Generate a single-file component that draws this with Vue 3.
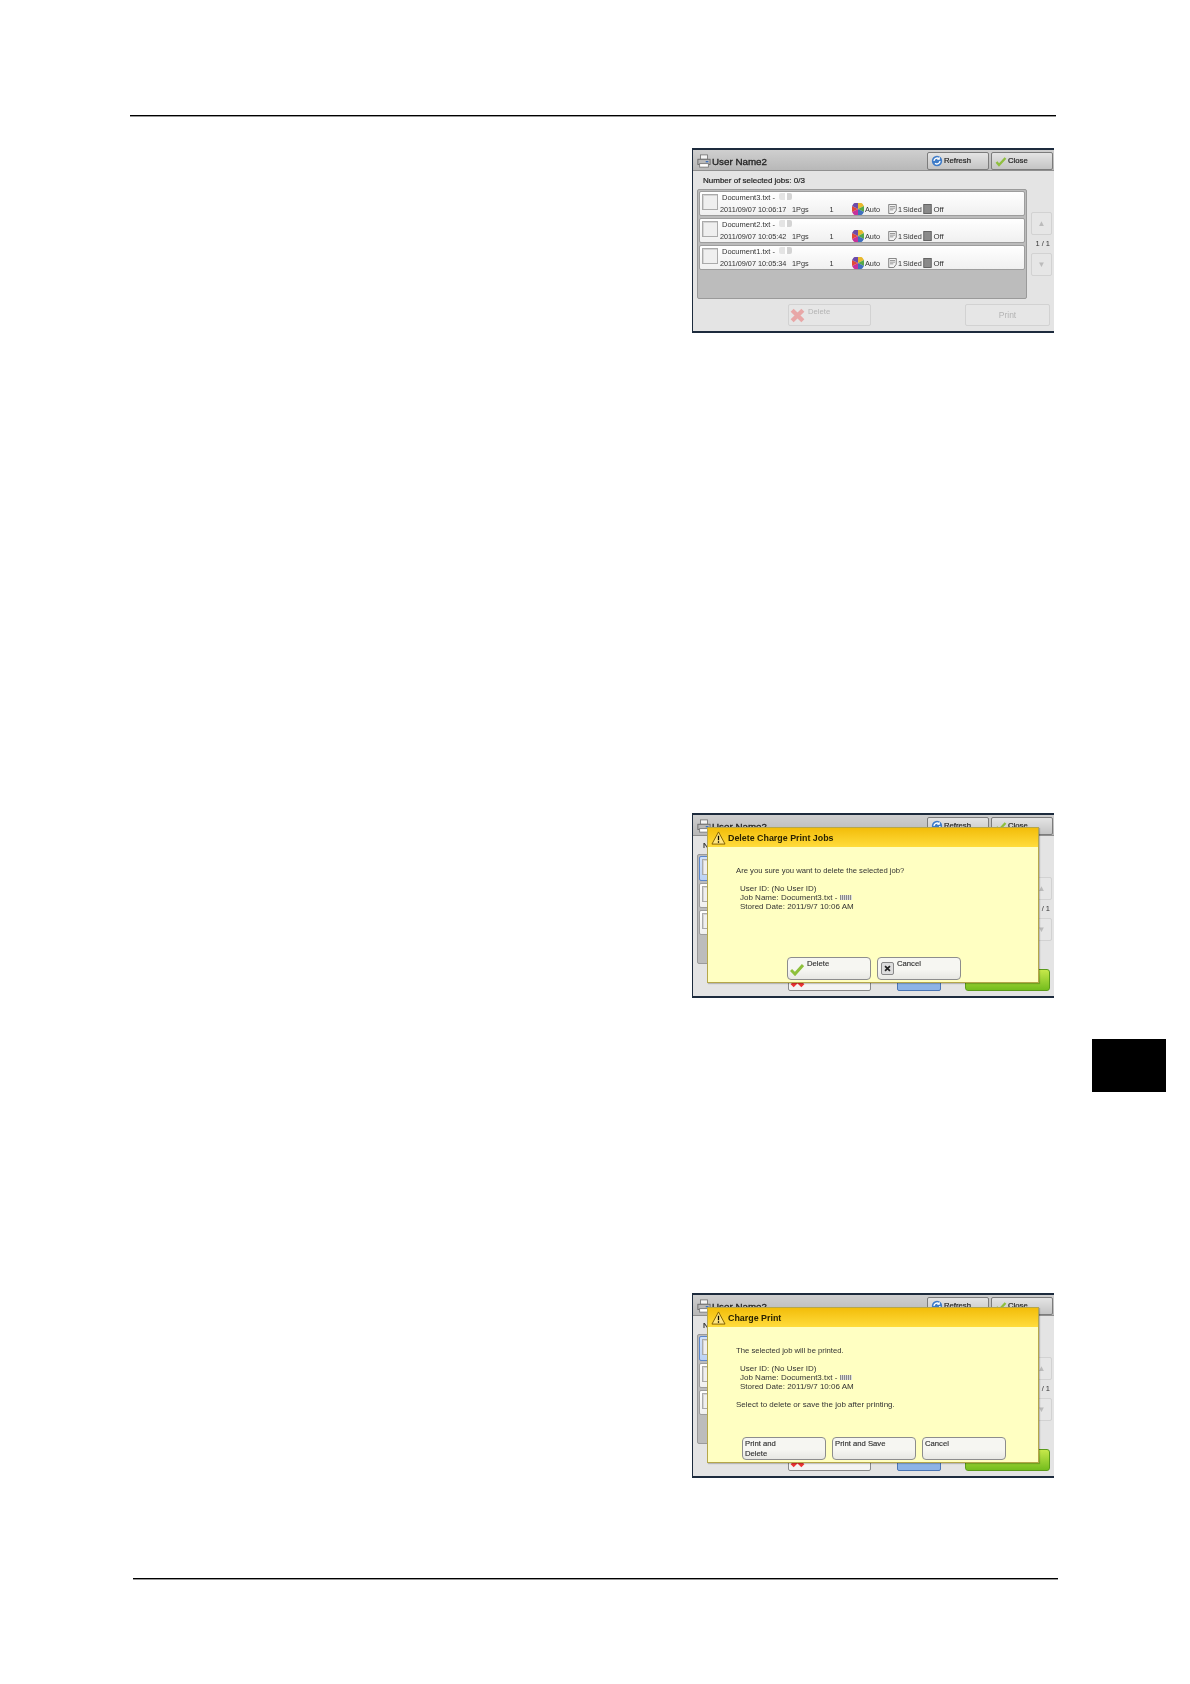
<script setup>
const jobs = [
  { name: 'Document3.txt -', date: '2011/09/07 10:06:17' },
  { name: 'Document2.txt -', date: '2011/09/07 10:05:42' },
  { name: 'Document1.txt -', date: '2011/09/07 10:05:34' },
]
const screens = [
  { id: 'list' },
  {
    id: 'delete',
    title: 'Delete Charge Print Jobs',
    intro: 'Are you sure you want to delete the selected job?',
    buttons: [
      { label: 'Delete', icon: 'check' },
      { label: 'Cancel', icon: 'cross' },
    ],
  },
  {
    id: 'print',
    title: 'Charge Print',
    intro: 'The selected job will be printed.',
    outro: 'Select to delete or save the job after printing.',
    buttons: [{ label: 'Print and Delete', wrap: true }, { label: 'Print and Save' }, { label: 'Cancel' }],
  },
]
</script>

<template>
  <div class="page">
    <main class="main">
      <div class="rule"></div>
      <section v-for="s in screens" :key="s.id" class="screen" :class="'screen-' + s.id">
        <header class="head">
          <svg class="printer" viewBox="0 0 16 16">
            <rect x="4" y="1" width="8" height="5" fill="#f4f4f4" stroke="#777" />
            <rect x="1" y="6" width="14" height="6" fill="#b9b9b9" stroke="#666" />
            <rect x="3" y="11" width="10" height="4" fill="#fff" stroke="#777" />
            <rect x="10" y="8" width="3" height="1.5" fill="#3b6fc0" />
          </svg>
          <span class="head-title">User Name2</span>
          <button class="tbtn">
            <svg class="ticon" viewBox="0 0 12 12">
              <circle cx="6" cy="6" r="5.2" fill="#3f7cc8" />
              <path d="M3 6a3 3 0 0 1 5-2.2M9 6a3 3 0 0 1-5 2.2" fill="none" stroke="#fff" stroke-width="1.3" />
              <path d="M8.8 1.8v3h-3z" fill="#fff" />
            </svg>
            Refresh
          </button>
          <button class="tbtn">
            <svg class="ticon" viewBox="0 0 12 12">
              <path d="M1.5 7l2.5 3L10.500 3" fill="none" stroke="#8fbf3f" stroke-width="2.4" />
            </svg>
            Close
          </button>
        </header>

        <div class="body">
          <div class="count">{{ s.id === 'list' ? 'Number of selected jobs: 0/3' : 'N' }}</div>
          <div class="content">
            <div class="list">
              <div v-for="(j, i) in jobs" :key="j.name" class="row" :class="{ selected: s.id !== 'list' && i === 0 }">
                <span class="check"></span>
                <div v-if="s.id === 'list'" class="row-text">
                  <div class="row-name">{{ j.name }}<i class="smudge"></i></div>
                  <div class="row-meta">
                    <span class="m-date">{{ j.date }}</span>
                    <span class="m-pgs">1Pgs</span>
                    <span class="m-qty">1</span>
                    <svg class="wheel" viewBox="0 0 12 12">
                      <path d="M6 6V0h4l2 3z" fill="#e8b92e" />
                      <path d="M6 6l6-3v6z" fill="#54a84a" />
                      <path d="M6 6l6 3-2 3H6z" fill="#3f6fbe" />
                      <path d="M6 6v6H2L0 9z" fill="#c6329b" />
                      <path d="M6 6L0 9V3z" fill="#e0483a" />
                      <path d="M6 6L0 3l2-3h4z" fill="#6d4ba8" />
                    </svg>
                    <span class="m-auto">Auto</span>
                    <svg class="doc" viewBox="0 0 10 12">
                      <path d="M.5.5h9v7l-3 4h-6z" fill="#f4f4f4" stroke="#666" />
                      <path d="M2 3h6M2 5h6M2 7h4" stroke="#888" />
                    </svg>
                    <span class="m-side">1 Sided</span>
                    <svg class="doc" viewBox="0 0 10 12">
                      <rect x=".5" y=".5" width="9" height="11" fill="#8a8a8a" stroke="#555" />
                    </svg>
                    <span class="m-off">Off</span>
                  </div>
                </div>
              </div>
            </div>
            <div class="scroll">
              <span class="sbtn">▲</span>
              <span class="pager">{{ s.id === 'list' ? '1 / 1' : '/ 1' }}</span>
              <span class="sbtn">▼</span>
            </div>
          </div>
          <div class="actions">
            <button class="abtn abtn-delete">
              <svg class="xicon" viewBox="0 0 14 14">
                <path d="M2 2l10 10M12 2L2 12" stroke="#e33" stroke-width="4" />
              </svg>
              <span v-if="s.id === 'list'">Delete</span>
            </button>
            <span v-if="s.id !== 'list'" class="abtn-blue"></span>
            <button class="abtn abtn-print">{{ s.id === 'list' ? 'Print' : '' }}</button>
          </div>
        </div>

        <div v-if="s.title" class="dialog">
          <div class="d-head">
            <svg class="warn" viewBox="0 0 16 15">
              <path d="M8 1l7 13H1z" fill="#ffe680" stroke="#7a5a00" />
              <path d="M8 5v5M8 11v1.6" stroke="#000" stroke-width="1.4" />
            </svg>
            {{ s.title }}
          </div>
          <div class="d-body">
            <p class="d-intro">{{ s.intro }}</p>
            <div class="d-info">
              <div>User ID: (No User ID)</div>
              <div>Job Name: Document3.txt - <i class="bars"></i></div>
              <div>Stored Date: 2011/9/7 10:06 AM</div>
            </div>
            <p v-if="s.outro" class="d-outro">{{ s.outro }}</p>
            <div class="d-btns" :class="{ wide: s.buttons.length === 3 }">
              <button v-for="b in s.buttons" :key="b.label" class="dbtn">
                <svg v-if="b.icon === 'check'" class="dicon" viewBox="0 0 14 14">
                  <path d="M1 8l4 4 8-9" fill="none" stroke="#8ec03c" stroke-width="3" />
                </svg>
                <span v-if="b.icon === 'cross'" class="dicon-box">
                  <svg viewBox="0 0 10 10"><path d="M1.500 1.500l7 7M8.500 1.500l-7 7" stroke="#222" stroke-width="2.400" /></svg>
                </span>
                <span class="dbtn-label" :class="{ wrap: b.wrap }">{{ b.label }}</span>
              </button>
            </div>
          </div>
        </div>
      </section>
      <div class="rule rule-bottom"></div>
    </main>
    <aside class="tab"></aside>
  </div>
</template>

<style>
html, body { background: #fff; }
</style>

<style scoped>
.page {
  display: grid;
  grid-template-columns: 926px 74px;
  column-gap: 36px;
  align-items: start;
  width: 1190px;
  height: 1684px;
  padding-left: 130px;
  box-sizing: border-box;
  overflow: hidden;
  background: #fff;
  font-family: "Liberation Sans", Arial, sans-serif;
  color: #222;
}
.main { padding-top: 115px; }
.rule { height: 1px; background: #000; box-shadow: 0 .4px 0 #000; }
.rule-bottom { margin: 100px -2px 0 3px; }
.tab { height: 53px; margin-top: 1039px; background: #000; }

.screen {
  position: relative;
  width: 362px;
  height: 185px;
  margin-left: 562px;
  box-sizing: border-box;
  border: solid #1d2b3d;
  border-width: 2px 0 2px 1px;
  background: #e4e4e4;
  overflow: hidden;
  filter: blur(.45px);
}
.screen-list { margin-top: 32px; }
.screen-delete { margin-top: 480px; }
.screen-print { margin-top: 295px; }

.head {
  display: flex;
  align-items: center;
  height: 21px;
  padding: 1px 1px 0 4px;
  box-sizing: border-box;
  gap: 2px;
  background: linear-gradient(#cfcfcf, #b8b8b8);
  border-bottom: 1px solid #8f8f8f;
}
.printer { width: 14px; height: 14px; }
.head-title { flex: 1; margin: 2px 0 0 -1px; font-size: 9.800px; color: #222; -webkit-text-stroke: .3px #222; }
.tbtn {
  display: flex;
  align-items: center;
  gap: 1px;
  width: 62px;
  height: 18px;
  padding: 0 0 0 3px;
  border: 1px solid #7c7c7c;
  border-radius: 2px;
  background: linear-gradient(#e4e4e4, #c4c4c4);
  font: 400 7.7px "Liberation Sans", Arial, sans-serif;
  -webkit-text-stroke: .2px #222;
  color: #222;
}
.ticon { width: 12px; height: 12px; }

.body { padding: 4px 2px 0 4px; }
.count { height: 14px; padding-left: 6px; font-size: 8px; line-height: 11px; -webkit-text-stroke: .2px #222; color: #222; white-space: nowrap; }
.content { display: flex; gap: 4px; }
.list {
  display: flex;
  flex-direction: column;
  gap: 2.2px;
  width: 331px;
  height: 110px;
  padding: 1px 1px 0;
  box-sizing: border-box;
  background: #bcbcbc;
  border: 1px solid #9a9a9a;
  border-radius: 2px;
}
.row {
  display: flex;
  height: 25px;
  padding: 2px 0 0 2px;
  box-sizing: border-box;
  gap: 3px;
  flex: none;
  background: linear-gradient(#fff, #f0f0f0);
  border: 1px solid #9d9d9d;
  border-radius: 2px;
}
.row.selected { background: linear-gradient(#cfe0fb, #bcd2f4); border-color: #5a86cc; }
.check { width: 16px; height: 16px; flex: none; box-sizing: border-box; border: 1px solid #aaa; background: #efefef; box-shadow: inset 1px 1px 0 #d4d4d4; }
.row-text { margin-top: -1px; font-size: 7.5px; line-height: 9px; color: #333; }
.row-name { padding-left: 1px; height: 10.500px; white-space: nowrap; }
.smudge { display: inline-block; width: 13px; height: 7px; margin-left: 4px; background: linear-gradient(90deg, #e4e4e4 0 45%, #fff 45% 60%, #d4d4d4 60%); border-radius: 2px; }
.row-meta { display: flex; align-items: center; height: 11px; white-space: nowrap; margin-left: -1px; font-size: 7.300px; }
.m-date { width: 72px; }
.m-pgs { width: 37.500px; }
.m-qty { width: 22.500px; }
.wheel { width: 12px; height: 12px; margin-right: 1px; border-radius: 3px; }
.m-auto { width: 23px; }
.doc { width: 9px; height: 10px; margin-right: 1px; flex: none; }
.m-side { width: 24.500px; word-spacing: -1px; }
.m-off { margin-left: 1px; font-size: 7.800px; }

.scroll { display: flex; flex-direction: column; align-items: center; width: 21px; padding-top: 23px; }
.sbtn {
  display: flex;
  align-items: center;
  justify-content: center;
  width: 21px;
  height: 23px;
  box-sizing: border-box;
  border: 1px solid #d2d2d2;
  border-radius: 2px;
  font-size: 8px;
  color: #bbb;
  background: #e6e6e6;
}
.pager { align-self: flex-end; height: 18px; padding-right: 2px; font-size: 7.500px; line-height: 18px; color: #333; white-space: nowrap; }

.actions { display: flex; align-items: flex-start; height: 24px; padding-top: 5px; margin-left: 91px; }
.abtn {
  height: 22px;
  box-sizing: border-box;
  border: 1px solid #d2d2d2;
  border-radius: 2px;
  background: #e6e6e6;
  color: #b4b4b4;
  font: 400 7.700px "Liberation Sans", Arial, sans-serif;
}
.abtn-delete { display: flex; width: 83px; padding: 1px 0 0 1px; gap: 3px; }
.abtn-delete span { margin-top: 1px; }
.xicon { width: 15px; height: 15px; margin-top: 2px; opacity: .35; }
.abtn-blue { width: 44px; height: 22px; margin-left: 26px; background: #8db3e6; border: 1px solid #4a75b5; border-radius: 2px; box-sizing: border-box; }
.abtn-print { width: 85px; margin-left: 94px; font-size: 8.500px; }
.screen-delete .abtn-delete, .screen-print .abtn-delete { background: #f4f4f4; border-color: #888; }
.screen-delete .xicon, .screen-print .xicon { opacity: 1; }
.screen-delete .abtn-print, .screen-print .abtn-print {
  margin-left: 24px;
  background: linear-gradient(#c6e84a, #74bd1e);
  border-color: #5b9a1a;
  border-radius: 3px;
}

.dialog {
  position: absolute;
  left: 14px;
  top: 12px;
  width: 332px;
  height: 156px;
  box-sizing: border-box;
  border: 1px solid #b5a64a;
  background: #ffffc2;
  box-shadow: 1px 1px 1px rgba(0, 0, 0, .2);
}
.d-head {
  display: flex;
  align-items: center;
  gap: 2px;
  height: 19px;
  padding-left: 3px;
  background: linear-gradient(#f3bd0a, #ffdc3c);
  font-size: 8.900px;
  font-weight: 700;
  color: #2a2200;
  white-space: nowrap;
}
.warn { width: 15px; height: 14px; flex: none; }
.d-body { position: relative; height: 135px; padding: 19px 0 0 28px; box-sizing: border-box; font-size: 7.700px; color: #333; }
.d-intro { margin: 0; height: 18px; line-height: 10px; }
.d-info { padding-left: 4px; font-size: 8px; line-height: 9.200px; }
.bars { display: inline-block; width: 12px; height: 5px; background: repeating-linear-gradient(90deg, #888 0 1px, #ddd 1px 2px); }
.d-outro { margin: 8px 0 0; line-height: 10px; font-size: 8px; }
.d-btns { position: absolute; top: 110px; left: 79px; display: flex; gap: 6px; }
.d-btns.wide { left: 34px; }
.dbtn {
  display: flex;
  align-items: flex-start;
  width: 84px;
  height: 23px;
  padding: 1px 2px;
  gap: 3px;
  box-sizing: border-box;
  border: 1px solid #8d8d8d;
  border-radius: 4px;
  background: linear-gradient(#f6f6f2 55%, #e8e8e4);
  font: 400 7.700px/9.500px "Liberation Sans", Arial, sans-serif;
  -webkit-text-stroke: .15px #333;
  color: #333;
  text-align: left;
}
.dicon { width: 14px; height: 14px; margin-top: 3px; flex: none; }
.dicon-box { display: flex; padding: 2px; margin-top: 3px; margin-left: 1px; width: 13px; height: 13px; box-sizing: border-box; flex: none; border: 1px solid #888; border-radius: 2px; background: #ddd; }
.dbtn-label { white-space: nowrap; }
.dbtn-label.wrap { width: 40px; white-space: normal; }
</style>
